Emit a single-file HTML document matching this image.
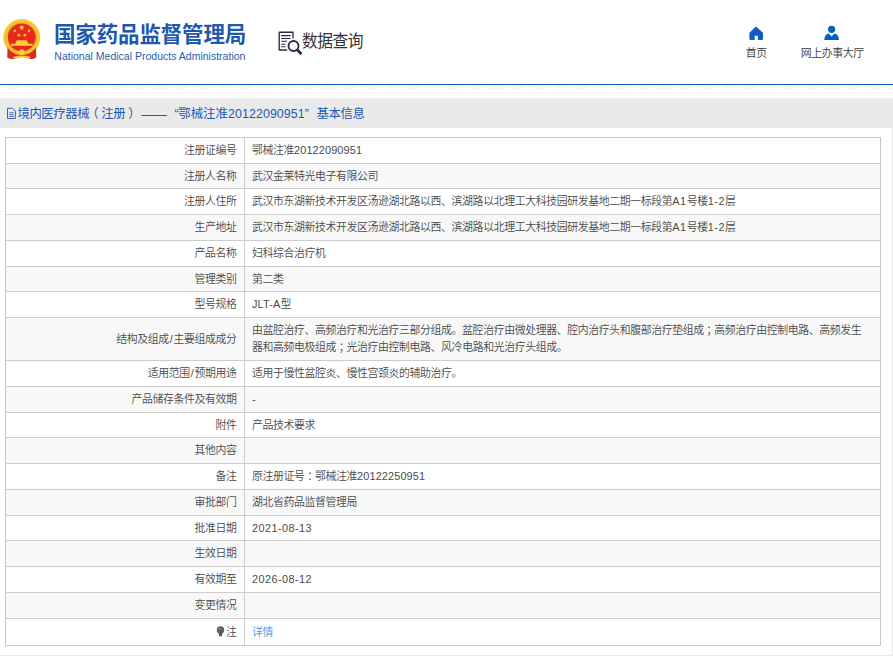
<!DOCTYPE html>
<html lang="zh-CN">
<head>
<meta charset="utf-8">
<title>国家药品监督管理局 数据查询</title>
<style>
html,body{margin:0;padding:0;}
body{width:893px;height:663px;overflow:hidden;background:#fff;position:relative;
  font-family:"Liberation Sans","Noto Sans CJK SC",sans-serif;color:#333;}
.abs{position:absolute;}
/* header */
#logo-cn{left:54px;top:20.2px;font-size:21.5px;line-height:30px;font-weight:700;color:#2058aa;letter-spacing:-0.15px;white-space:nowrap;}
#logo-en{left:54.3px;top:49.1px;font-size:10.53px;line-height:14px;color:#2a5caa;white-space:nowrap;}
#dq{left:301.5px;top:28.6px;font-size:17.5px;line-height:24px;color:#333;white-space:nowrap;letter-spacing:-0.55px;transform:scaleX(0.9);transform-origin:0 0;}
.nav{font-size:10.9px;letter-spacing:-0.4px;font-weight:350;line-height:14px;color:#3a3a3a;white-space:nowrap;text-align:center;}
#blue{left:0;top:84px;width:893px;height:1px;background:#0e5fc0;}
#hatch{left:0;top:85px;width:893px;height:4px;
  background:repeating-linear-gradient(135deg,#fff 0,#fff 1.7px,#eee 1.7px,#eee 2.7px);}
#bar{left:0;top:98px;width:893px;height:30px;background:#eaeaea;}
#title{left:17.4px;top:105.1px;font-size:12.4px;line-height:18px;color:#1b59b4;white-space:nowrap;letter-spacing:-0.4px;}
.p{position:relative;}
#panel-r{left:892px;top:128px;width:1px;height:528px;background:#e9e9e9;}
#panel-b{left:0;top:655px;width:893px;height:1px;background:#e9e9e9;}
/* table */
#tb{left:5px;top:137px;width:876px;height:509px;box-sizing:border-box;border:1px solid #c8c8c8;}
.r{position:absolute;left:0;width:874px;box-sizing:border-box;border-bottom:1px solid #cecece;font-size:10.9px;letter-spacing:-0.385px;line-height:17px;font-weight:350;color:#4a4a4a;}
.r.g{background:#f8f8f8;}
.r .l{position:absolute;left:0;top:0;bottom:0;width:239px;box-sizing:border-box;border-right:1px solid #cecece;text-align:right;padding-right:7.5px;white-space:nowrap;display:flex;align-items:center;justify-content:flex-end;}
.r .v{position:absolute;left:239px;top:0;bottom:0;right:0;padding-left:7px;padding-right:0;display:flex;align-items:center;white-space:nowrap;}
.n{letter-spacing:0.13px;}
.d{letter-spacing:0.42px;}
.e{letter-spacing:0.55px;}
.j{letter-spacing:0.15px;}
.s{padding:0 1px;}
a{color:#4494ee;text-decoration:none;}
</style>
</head>
<body>
<!-- emblem -->
<svg class="abs" style="left:0;top:15px" width="46" height="48" viewBox="0 15 46 48">
  <circle cx="21.75" cy="37.5" r="18.5" fill="#f7c632"/>
  <path d="M7.6 47 L7.2 57.6 Q10 59.7 14 58.7 L21.75 56.4 L29.5 58.7 Q33.5 59.7 36.3 57.6 L35.9 47 Z" fill="#dc2a1c"/>
  <circle cx="21.75" cy="37.5" r="17.5" fill="#f7c632"/>
  <circle cx="21.75" cy="37.5" r="15.4" fill="#efb625"/>
  <circle cx="21.75" cy="37.3" r="13.9" fill="#e9291f"/>
  <polygon points="21.70,24.40 22.45,26.57 24.74,26.61 22.91,27.99 23.58,30.19 21.70,28.88 19.82,30.19 20.49,27.99 18.66,26.61 20.95,26.57" fill="#f8cf3a"/>
  <circle cx="14.8" cy="30.8" r="1.35" fill="#f5c534"/><circle cx="29" cy="30.8" r="1.35" fill="#f5c534"/>
  <circle cx="19" cy="35.2" r="1.35" fill="#f5c534"/><circle cx="24.8" cy="35.2" r="1.35" fill="#f5c534"/>
  <path d="M17 40.3 h9.5 l1 1.7 h-11.5 z M15.6 42 h12.3 v1.7 h-12.3 z M11 43.7 h21.5 v2 h-21.5 z" fill="#f8cf3a"/>
  <path d="M17.3 54.6 Q21.75 57.6 26.2 54.6" fill="none" stroke="#dc2a1c" stroke-width="1.1"/>
  <circle cx="21.75" cy="51.8" r="2.6" fill="#fad24a"/>
  <path d="M12.8 57 Q21.75 54.2 30.7 57 L30 58.6 Q21.75 56.2 13.5 58.6 Z" fill="#f7c632"/>
</svg>
<div id="logo-cn" class="abs">国家药品监督管理局</div>
<div id="logo-en" class="abs">National Medical Products Administration</div>

<!-- data query icon -->
<svg class="abs" style="left:276px;top:29px" width="28" height="27" viewBox="0 0 28 27" fill="none" stroke="#2a2a42">
  <path d="M17 9 V3.2 H3.2 V21 H10.7" stroke-width="1.35" stroke-linejoin="round" stroke-linecap="round"/>
  <path d="M5.2 6.6 H14.6 M5.2 9.5 H14.6 M5.2 12.3 H11 M5.2 15.2 H9.5 M5.2 17.8 H9.5" stroke-width="1.1"/>
  <circle cx="17.5" cy="17" r="5" stroke-width="1.85"/>
  <path d="M21.5 21 L24.6 24.3" stroke-width="2.8" stroke-linecap="round"/>
</svg>
<div id="dq" class="abs">数据查询</div>

<!-- nav -->
<svg class="abs" style="left:748.2px;top:25.3px" width="16" height="16" viewBox="0 0 16 16">
  <path d="M8 2.6 L14.2 8.2 V14.2 H10.6 V9.9 H5.9 V14.2 H2.2 V8.2 Z" fill="#0d5cc4" stroke="#0d5cc4" stroke-width="1.6" stroke-linejoin="round"/>
</svg>
<div class="abs nav" style="left:736.3px;top:46px;width:40px">首页</div>
<svg class="abs" style="left:823.1px;top:24.4px" width="18" height="18" viewBox="0 0 18 18">
  <circle cx="8.6" cy="5.3" r="3.6" fill="#0d5cc4"/>
  <path d="M1.2 16 Q1.6 10.5 5.6 9.6 L8.6 12.4 L11.6 9.6 Q15.6 10.5 16 16 Z" fill="#0d5cc4"/>
</svg>
<div class="abs nav" style="left:792.2px;top:46px;width:80px">网上办事大厅</div>

<div id="blue" class="abs"></div>
<div id="hatch" class="abs"></div>
<div id="bar" class="abs"></div>
<svg class="abs" style="left:6px;top:106px" width="12" height="14" viewBox="0 0 12 14" fill="none" stroke="#2a5cb4" stroke-width="1">
  <path d="M1.5 2.3 H6.6 L9.4 5.1 V12.5 H1.5 Z" stroke-width="0.95"/><path d="M3.2 6.7 H7.8 M3.2 8.6 H7.8 M3.2 10.5 H7.8" stroke-width="0.85"/>
</svg>
<div id="title" class="abs">境内医疗器械<span class="p" style="left:-3.2px">（</span>注册<span class="p" style="left:2.8px">）</span><span style="margin-left:3.9px;font-size:12.8px;letter-spacing:0;position:relative;top:0.7px">——</span><span style="margin-left:7.6px">“</span><span style="letter-spacing:0.1px">鄂械注准</span><span style="letter-spacing:0.07px">20122090951</span>”<span style="margin-left:8.2px">基本信息</span></div>
<div id="panel-r" class="abs"></div>
<div id="panel-b" class="abs"></div>

<div id="tb" class="abs">
<div class="r" style="top:0px;height:26px"><div class="l"><div>注册证编号</div></div><div class="v"><div>鄂械注准<span class="n">20122090951</span></div></div></div>
<div class="r g" style="top:26px;height:25px"><div class="l"><div>注册人名称</div></div><div class="v"><div>武汉金莱特光电子有限公司</div></div></div>
<div class="r" style="top:51px;height:26px"><div class="l"><div>注册人住所</div></div><div class="v"><div>武汉市东湖新技术开发区汤逊湖北路以西、滨湖路以北理工大科技园研发基地二期一标段第<span class="e">A1</span>号楼<span class="e">1-2</span>层</div></div></div>
<div class="r g" style="top:77px;height:26px"><div class="l"><div>生产地址</div></div><div class="v"><div>武汉市东湖新技术开发区汤逊湖北路以西、滨湖路以北理工大科技园研发基地二期一标段第<span class="e">A1</span>号楼<span class="e">1-2</span>层</div></div></div>
<div class="r" style="top:103px;height:26px"><div class="l"><div>产品名称</div></div><div class="v"><div>妇科综合治疗机</div></div></div>
<div class="r g" style="top:129px;height:25px"><div class="l"><div>管理类别</div></div><div class="v"><div>第二类</div></div></div>
<div class="r" style="top:154px;height:26px"><div class="l"><div>型号规格</div></div><div class="v"><div><span class="j">JLT-A</span>型</div></div></div>
<div class="r g" style="top:180px;height:43px"><div class="l"><div>结构及组成<span class="s">/</span>主要组成成分</div></div><div class="v"><div>由盆腔治疗、高频治疗和光治疗三部分组成。盆腔治疗由微处理器、腔内治疗头和腹部治疗垫组成<span class="p" style="left:2.6px">；</span>高频治疗由控制电路、高频发生<br>器和高频电极组成<span class="p" style="left:2.6px">；</span>光治疗由控制电路、风冷电路和光治疗头组成。</div></div></div>
<div class="r" style="top:223px;height:26px"><div class="l"><div>适用范围<span class="s">/</span>预期用途</div></div><div class="v"><div>适用于慢性盆腔炎、慢性宫颈炎的辅助治疗。</div></div></div>
<div class="r g" style="top:249px;height:26px"><div class="l"><div>产品储存条件及有效期</div></div><div class="v"><div>-</div></div></div>
<div class="r" style="top:275px;height:25px"><div class="l"><div>附件</div></div><div class="v"><div>产品技术要求</div></div></div>
<div class="r g" style="top:300px;height:26px"><div class="l"><div>其他内容</div></div><div class="v"><div></div></div></div>
<div class="r" style="top:326px;height:26px"><div class="l"><div>备注</div></div><div class="v"><div>原注册证号<span class="p" style="left:2.6px">：</span>鄂械注准<span class="n">20122250951</span></div></div></div>
<div class="r g" style="top:352px;height:26px"><div class="l"><div>审批部门</div></div><div class="v"><div>湖北省药品监督管理局</div></div></div>
<div class="r" style="top:378px;height:25px"><div class="l"><div>批准日期</div></div><div class="v"><div><span class="d">2021-08-13</span></div></div></div>
<div class="r g" style="top:403px;height:26px"><div class="l"><div>生效日期</div></div><div class="v"><div></div></div></div>
<div class="r" style="top:429px;height:26px"><div class="l"><div>有效期至</div></div><div class="v"><div><span class="d">2026-08-12</span></div></div></div>
<div class="r g" style="top:455px;height:26px"><div class="l"><div>变更情况</div></div><div class="v"><div></div></div></div>
<div class="r" style="top:481px;height:26px;border-bottom:0"><div class="l"><div><svg width="9" height="11" viewBox="0 0 9 11" style="margin-right:0.5px;position:relative;top:1.6px"><circle cx="4.5" cy="4" r="3.7" fill="#5c5c5c"/><path d="M2.6 6.6 H6.4 L6 10.2 H3 Z" fill="#5c5c5c"/><circle cx="3.4" cy="2.9" r="1" fill="#8a8a8a"/></svg>注</div></div><div class="v"><div><a>详情</a></div></div></div>
</div>
</body>
</html>
